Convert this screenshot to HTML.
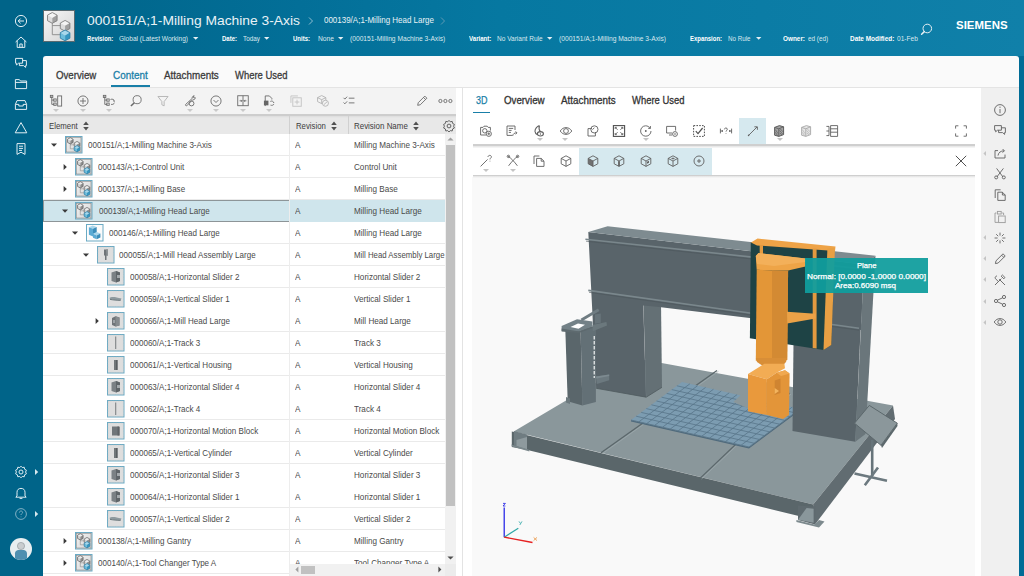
<!DOCTYPE html>
<html><head><meta charset="utf-8">
<style>
*{box-sizing:border-box}
html,body{margin:0;padding:0}
body{width:1024px;height:576px;overflow:hidden;position:relative;font-family:"Liberation Sans",sans-serif;background:#006489;color:#464646}
.a{position:absolute}
.t{white-space:nowrap;line-height:1}
svg{overflow:visible}
</style></head><body>
<div class=a style='left:0px;top:0px;width:1024px;height:576px;background:linear-gradient(90deg,#006489 0px,#006489 43px,#036f98 300px,#0678a1 500px,#1080a9 1024px);'></div>
<div class=a style='left:0px;top:56px;width:1024px;height:520px;background:#006c96;'></div>
<div class=a style='left:0px;top:0px;width:43px;height:576px;background:#006489;'></div>
<svg class=a style='left:43px;top:10px;' width='32' height='32' viewBox='0 0 32 32'><defs><linearGradient id='hg' x1='0' y1='0' x2='1' y2='1'><stop offset='0' stop-color='#f8f8f8'/><stop offset='1' stop-color='#d2d2d2'/></linearGradient></defs><rect x='0.5' y='0.5' width='31' height='31' fill='url(#hg)' stroke='#5a6a70' stroke-width='1'/><g transform='scale(1.0)'><path d='M9.3 13V24.7H18M9.3 15.6H18' fill='none' stroke='#8a8a8a' stroke-width='0.9'/><polygon points='9.3,2.524 14.100000000000001,5.1160000000000005 9.3,7.9 4.500000000000001,5.1160000000000005' fill='#f4f4f4'/><polygon points='4.500000000000001,5.1160000000000005 9.3,7.9 9.3,13.276 4.500000000000001,10.684000000000001' fill='#dcdcdc'/><polygon points='9.3,7.9 14.100000000000001,5.1160000000000005 14.100000000000001,10.684000000000001 9.3,13.276' fill='#a0a0a0'/><polygon points='9.3,2.524 14.100000000000001,5.1160000000000005 14.100000000000001,10.684000000000001 9.3,13.276 4.500000000000001,10.684000000000001 4.500000000000001,5.1160000000000005' fill='none' stroke='#7a7a7a' stroke-width='0.86'/><polygon points='22.1,10.424 26.900000000000002,13.016000000000002 22.1,15.8 17.3,13.016000000000002' fill='#f4f4f4'/><polygon points='17.3,13.016000000000002 22.1,15.8 22.1,21.176000000000002 17.3,18.584' fill='#dcdcdc'/><polygon points='22.1,15.8 26.900000000000002,13.016000000000002 26.900000000000002,18.584 22.1,21.176000000000002' fill='#a0a0a0'/><polygon points='22.1,10.424 26.900000000000002,13.016000000000002 26.900000000000002,18.584 22.1,21.176000000000002 17.3,18.584 17.3,13.016000000000002' fill='none' stroke='#7a7a7a' stroke-width='0.86'/><polygon points='22.1,20.023999999999997 26.900000000000002,22.616 22.1,25.4 17.3,22.616' fill='#a8d8ec'/><polygon points='17.3,22.616 22.1,25.4 22.1,30.776 17.3,28.183999999999997' fill='#6cbddc'/><polygon points='22.1,25.4 26.900000000000002,22.616 26.900000000000002,28.183999999999997 22.1,30.776' fill='#3596c0'/><polygon points='22.1,20.023999999999997 26.900000000000002,22.616 26.900000000000002,28.183999999999997 22.1,30.776 17.3,28.183999999999997 17.3,22.616' fill='none' stroke='#2a7fa8' stroke-width='0.86'/></g></svg>
<span class='a t' style='left:87.00px;top:13.84px;font-size:13.6px;color:#e9f2f6;transform:scaleX(1.0177);transform-origin:0 0;'>000151/A;1-Milling Machine 3-Axis</span>
<svg class=a style='left:307px;top:16px;' width='8' height='10' viewBox='0 0 8 10'><path d='M2 1.5L5.5 5L2 8.5' fill='none' stroke='#8fbfd2' stroke-width='1'/></svg>
<span class='a t' style='left:324.00px;top:16.26px;font-size:8.4px;color:#e9f2f6;transform:scaleX(0.9526);transform-origin:0 0;'>000139/A;1-Milling Head Large</span>
<svg class=a style='left:439px;top:16px;' width='8' height='10' viewBox='0 0 8 10'><path d='M2 1.5L5.5 5L2 8.5' fill='none' stroke='#5d9ab4' stroke-width='1'/></svg>
<span class='a t' style='left:87.00px;top:34.85px;font-size:7.0px;color:#ffffff;font-weight:700;transform:scaleX(0.8345);transform-origin:0 0;'>Revision:</span>
<span class='a t' style='left:119.00px;top:34.85px;font-size:7.0px;color:#dbe9ef;transform:scaleX(0.9400);transform-origin:0 0;'>Global (Latest Working)</span>
<svg class=a style='left:192.5px;top:36.6px;' width='6' height='4' viewBox='0 0 6 4'><path d='M0 0H5.4L2.7 2.8Z' fill='#e6f0f4'/></svg>
<span class='a t' style='left:221.50px;top:34.85px;font-size:7.0px;color:#ffffff;font-weight:700;transform:scaleX(0.8564);transform-origin:0 0;'>Date:</span>
<span class='a t' style='left:242.50px;top:34.85px;font-size:7.0px;color:#dbe9ef;transform:scaleX(0.9097);transform-origin:0 0;'>Today</span>
<svg class=a style='left:263.7px;top:36.6px;' width='6' height='4' viewBox='0 0 6 4'><path d='M0 0H5.4L2.7 2.8Z' fill='#e6f0f4'/></svg>
<span class='a t' style='left:293.00px;top:34.85px;font-size:7.0px;color:#ffffff;font-weight:700;transform:scaleX(0.8567);transform-origin:0 0;'>Units:</span>
<span class='a t' style='left:318.20px;top:34.85px;font-size:7.0px;color:#dbe9ef;transform:scaleX(0.9561);transform-origin:0 0;'>None</span>
<svg class=a style='left:338px;top:36.6px;' width='6' height='4' viewBox='0 0 6 4'><path d='M0 0H5.4L2.7 2.8Z' fill='#e6f0f4'/></svg>
<span class='a t' style='left:469.30px;top:34.85px;font-size:7.0px;color:#ffffff;font-weight:700;transform:scaleX(0.8720);transform-origin:0 0;'>Variant:</span>
<span class='a t' style='left:497.40px;top:34.85px;font-size:7.0px;color:#dbe9ef;transform:scaleX(0.9324);transform-origin:0 0;'>No Variant Rule</span>
<svg class=a style='left:547.4px;top:36.6px;' width='6' height='4' viewBox='0 0 6 4'><path d='M0 0H5.4L2.7 2.8Z' fill='#e6f0f4'/></svg>
<span class='a t' style='left:690.00px;top:34.85px;font-size:7.0px;color:#ffffff;font-weight:700;transform:scaleX(0.8480);transform-origin:0 0;'>Expansion:</span>
<span class='a t' style='left:728.00px;top:34.85px;font-size:7.0px;color:#dbe9ef;transform:scaleX(0.8894);transform-origin:0 0;'>No Rule</span>
<svg class=a style='left:755.6px;top:36.6px;' width='6' height='4' viewBox='0 0 6 4'><path d='M0 0H5.4L2.7 2.8Z' fill='#e6f0f4'/></svg>
<span class='a t' style='left:783.00px;top:34.85px;font-size:7.0px;color:#ffffff;font-weight:700;transform:scaleX(0.9119);transform-origin:0 0;'>Owner:</span>
<span class='a t' style='left:807.60px;top:34.85px;font-size:7.0px;color:#dbe9ef;transform:scaleX(0.9104);transform-origin:0 0;'>ed (ed)</span>
<span class='a t' style='left:850.00px;top:34.85px;font-size:7.0px;color:#ffffff;font-weight:700;transform:scaleX(0.9184);transform-origin:0 0;'>Date Modified:</span>
<span class='a t' style='left:897.00px;top:34.85px;font-size:7.0px;color:#dbe9ef;transform:scaleX(0.9375);transform-origin:0 0;'>01-Feb</span>
<span class='a t' style='left:349.90px;top:34.85px;font-size:7.0px;color:#dbe9ef;transform:scaleX(0.9520);transform-origin:0 0;'>(000151-Milling Machine 3-Axis)</span>
<span class='a t' style='left:558.90px;top:34.85px;font-size:7.0px;color:#dbe9ef;transform:scaleX(0.9516);transform-origin:0 0;'>(000151/A;1-Milling Machine 3-Axis)</span>
<svg class=a style='left:919px;top:22px;' width='14' height='14' viewBox='0 0 14 14'><circle cx='8.3' cy='6.5' r='4.3' fill='none' stroke='#e6f0f4' stroke-width='1'/><path d='M5.3 9.6L2.6 12.2' stroke='#e6f0f4' stroke-width='1.5' stroke-linecap='round'/></svg>
<span class='a t' style='left:955.60px;top:21.06px;font-size:10.4px;color:#ffffff;font-weight:700;transform:scaleX(1.1030);transform-origin:0 0;'>SIEMENS</span>
<svg class=a style='left:13px;top:13px;' width='16' height='16' viewBox='0 0 16 16'><circle cx='8' cy='8' r='5.6' stroke='#e2eef3' stroke-width='1' fill='none'/><path d='M11 8H5.2M7.6 5.6L5.2 8L7.6 10.4' stroke='#e2eef3' stroke-width='1' fill='none'/></svg>
<svg class=a style='left:13px;top:34px;' width='16' height='16' viewBox='0 0 16 16'><path d='M2.6 8L8 3L13.4 8M4.2 6.6V13.4H11.8V6.6M6.8 13.4V10H9.2V13.4' stroke='#e2eef3' stroke-width='1' fill='none'/></svg>
<svg class=a style='left:13px;top:55px;' width='16' height='16' viewBox='0 0 16 16'><path d='M2.6 3.4H9.6V8.2H5.6L3.4 10V8.2H2.6Z' stroke='#e2eef3' stroke-width='1' fill='none'/><path d='M9.6 5.6H13.4V10.6H12.6V12.4L10.6 10.6H6.4V8.2' stroke='#e2eef3' stroke-width='1' fill='none'/></svg>
<svg class=a style='left:13px;top:76px;' width='16' height='16' viewBox='0 0 16 16'><path d='M2.4 3.6H6.4L7.4 5H13.6V12.6H2.4Z M2.4 6.4H13.6' stroke='#e2eef3' stroke-width='1' fill='none'/></svg>
<svg class=a style='left:13px;top:97px;' width='16' height='16' viewBox='0 0 16 16'><path d='M2.4 7.4L4 3.6H12L13.6 7.4V12.4H2.4Z M2.4 7.4H5.8V9H10.2V7.4H13.6' stroke='#e2eef3' stroke-width='1' fill='none'/></svg>
<svg class=a style='left:13px;top:120px;' width='16' height='16' viewBox='0 0 16 16'><path d='M8 2.6L13.8 12.8H2.2Z' stroke='#e2eef3' stroke-width='1' fill='none'/></svg>
<svg class=a style='left:13px;top:141px;' width='16' height='16' viewBox='0 0 16 16'><path d='M4 2.6H12V13.4L8 11.2L4 13.4Z M6 5.2H10M6 7.4H10M6 9.4H9' stroke='#e2eef3' stroke-width='1' fill='none'/></svg>
<svg class=a style='left:13px;top:464px;' width='16' height='16' viewBox='0 0 16 16'><circle cx='8' cy='8' r='2' stroke='#e2eef3' stroke-width='1' fill='none'/><path d='M8 2.2L9.3 3.6L11.2 3.2L11.6 5.2L13.4 6.2L12.6 8L13.4 9.8L11.6 10.8L11.2 12.8L9.3 12.4L8 13.8L6.7 12.4L4.8 12.8L4.4 10.8L2.6 9.8L3.4 8L2.6 6.2L4.4 5.2L4.8 3.2L6.7 3.6Z' stroke='#e2eef3' stroke-width='1' fill='none'/></svg>
<svg class=a style='left:35px;top:469px;' width='4' height='6' viewBox='0 0 4 6'><path d='M0 0L3.2 3L0 6Z' fill='#d8e8ee'/></svg>
<svg class=a style='left:13px;top:485px;' width='16' height='16' viewBox='0 0 16 16'><path d='M4 11V7.2C4 4.8 5.6 3.4 8 3.4C10.4 3.4 12 4.8 12 7.2V11L13.2 12.2H2.8Z M6.6 13.4H9.4' stroke='#e2eef3' stroke-width='1' fill='none'/></svg>
<svg class=a style='left:13px;top:506px;' width='16' height='16' viewBox='0 0 16 16'><circle cx='8' cy='8' r='5.4' stroke='#7fb0c4' stroke-width='1' fill='none'/><path d='M6.4 6.6C6.4 5.6 7.2 5 8 5C8.9 5 9.6 5.6 9.6 6.4C9.6 7.6 8 7.6 8 9M8 10.6V11.2' stroke='#7fb0c4' stroke-width='1' fill='none'/></svg>
<svg class=a style='left:35px;top:511px;' width='4' height='6' viewBox='0 0 4 6'><path d='M0 0L3.2 3L0 6Z' fill='#d8e8ee'/></svg>
<svg class=a style='left:10px;top:538px;' width='22' height='22' viewBox='0 0 22 22'><defs><clipPath id='av'><circle cx='11' cy='11' r='11'/></clipPath></defs><circle cx='11' cy='11' r='11' fill='#e8eef0'/><g clip-path='url(#av)'><circle cx='11' cy='8' r='3.6' fill='#c9cdcf' stroke='#8d9397' stroke-width='0.6'/><path d='M5 22V15.6C5 13.4 6.6 12 8.6 12H13.4C15.4 12 17 13.4 17 15.6V22Z' fill='#4f8fb0'/></g></svg>
<div class=a style='left:43px;top:56px;width:976px;height:520px;background:#fafafa;border-radius:3px 3px 0 0'></div>
<span class='a t' style='left:56.30px;top:70.25px;font-size:11.0px;color:#3a3a3a;transform:scaleX(0.8791);transform-origin:0 0;-webkit-text-stroke:0.3px #3a3a3a'>Overview</span>
<span class='a t' style='left:113.00px;top:70.25px;font-size:11.0px;color:#197fa8;transform:scaleX(0.9006);transform-origin:0 0;-webkit-text-stroke:0.3px #197fa8'>Content</span>
<span class='a t' style='left:164.00px;top:70.25px;font-size:11.0px;color:#3a3a3a;transform:scaleX(0.8963);transform-origin:0 0;-webkit-text-stroke:0.3px #3a3a3a'>Attachments</span>
<span class='a t' style='left:235.00px;top:70.25px;font-size:11.0px;color:#3a3a3a;transform:scaleX(0.8603);transform-origin:0 0;-webkit-text-stroke:0.3px #3a3a3a'>Where Used</span>
<div class=a style='left:111px;top:85.4px;width:39px;height:1.6px;background:#197fa8;'></div>
<div class=a style='left:43px;top:87px;width:976px;height:1px;background:#e4e4e4;'></div>
<div class=a style='left:43px;top:88px;width:413px;height:27px;background:#f3f3f3;'></div>
<div class=a style='left:43px;top:116px;width:413px;height:18px;background:#e8e8e8;'></div>
<div class=a style='left:43px;top:114.4px;width:413px;height:1.3px;background:#cdcdcd;'></div>
<div class=a style='left:43px;top:115.7px;width:413px;height:2.6px;background:linear-gradient(#dcdcdc,#e8e8e8);'></div>
<div class=a style='left:43px;top:134px;width:402px;height:442px;background:#ffffff;'></div>
<svg class=a style='left:49.2px;top:94.0px;' width='14' height='14' viewBox='0 0 14 14'><g transform='translate(7 7) scale(0.94) translate(-7 -7)'><path d='M2.5 2V10.6H5.2M2.5 6H5.2' fill='none' stroke='#6a6a6a' stroke-width='0.95'/><rect x='1' y='1' width='2.6' height='2.2' fill='none' stroke='#6a6a6a' stroke-width='0.95'/><rect x='4.6' y='4.8' width='2.6' height='2.4' fill='none' stroke='#6a6a6a' stroke-width='0.95'/><rect x='4.6' y='9.2' width='2.6' height='2.4' fill='none' stroke='#6a6a6a' stroke-width='0.95'/><rect x='8.8' y='1.6' width='4.2' height='10.8' fill='none' stroke='#6a6a6a' stroke-width='0.95'/></g></svg>
<svg class=a style='left:53px;top:109.0px;' width='6' height='4' viewBox='0 0 6 4'><path d='M0 0H6L3 3Z' fill='#c9c9c9'/></svg>
<svg class=a style='left:75.5px;top:94.0px;' width='14' height='14' viewBox='0 0 14 14'><g transform='translate(7 7) scale(0.94) translate(-7 -7)'><circle cx='7' cy='7' r='5.4' fill='none' stroke='#6a6a6a' stroke-width='0.95'/><path d='M7 3.8V10.2M3.8 7H10.2' fill='none' stroke='#6a6a6a' stroke-width='0.95'/></g></svg>
<svg class=a style='left:79.5px;top:109.0px;' width='6' height='4' viewBox='0 0 6 4'><path d='M0 0H6L3 3Z' fill='#c9c9c9'/></svg>
<svg class=a style='left:102.0px;top:94.0px;' width='14' height='14' viewBox='0 0 14 14'><g transform='translate(7 7) scale(0.94) translate(-7 -7)'><path d='M2.5 2V10.6H5.2M2.5 6H5.2' fill='none' stroke='#6a6a6a' stroke-width='0.95'/><rect x='1' y='1' width='2.6' height='2.2' fill='none' stroke='#6a6a6a' stroke-width='0.95'/><rect x='4.6' y='4.8' width='2.6' height='2.4' fill='none' stroke='#6a6a6a' stroke-width='0.95'/><rect x='4.6' y='9.2' width='2.6' height='2.4' fill='none' stroke='#6a6a6a' stroke-width='0.95'/><path d='M8.6 5.4C10.6 4.4 12.6 5.4 12.8 7.4M12.8 7.4L11.4 6.8M9.2 10.6C10.8 11 12.4 10.2 12.8 8.8' fill='none' stroke='#6a6a6a' stroke-width='0.95'/></g></svg>
<svg class=a style='left:105.7px;top:109.0px;' width='6' height='4' viewBox='0 0 6 4'><path d='M0 0H6L3 3Z' fill='#c9c9c9'/></svg>
<svg class=a style='left:129.0px;top:94.0px;' width='14' height='14' viewBox='0 0 14 14'><g transform='translate(7 7) scale(0.94) translate(-7 -7)'><circle cx='8.2' cy='5.6' r='4.3' fill='none' stroke='#6a6a6a' stroke-width='0.95'/><path d='M5.2 8.8L1.6 12.4' fill='none' stroke='#6a6a6a' stroke-width='1.6'/></g></svg>
<svg class=a style='left:155.6px;top:94.0px;' width='14' height='14' viewBox='0 0 14 14'><g transform='translate(7 7) scale(0.94) translate(-7 -7)'><path d='M1.6 2.2H12.4L8.2 7.6V12.2L5.8 11V7.6Z' fill='none' stroke='#b4b4b4' stroke-width='1'/></g></svg>
<svg class=a style='left:182.5px;top:94.0px;' width='14' height='14' viewBox='0 0 14 14'><g transform='translate(7 7) scale(0.94) translate(-7 -7)'><path d='M11.6 1.6C10 1.6 9 2.8 9.4 4.2L2.4 10.6C1.8 11.2 2.4 12.4 3.4 12.2L10 5.6C11.4 6 12.6 5 12.6 3.4L11.2 3.8L10.4 3L10.8 1.8Z' fill='none' stroke='#6a6a6a' stroke-width='0.95'/><circle cx='8.6' cy='9.6' r='2.6' fill='none' stroke='#6a6a6a' stroke-width='0.95'/></g></svg>
<svg class=a style='left:186.7px;top:109.0px;' width='6' height='4' viewBox='0 0 6 4'><path d='M0 0H6L3 3Z' fill='#c9c9c9'/></svg>
<svg class=a style='left:209.0px;top:94.0px;' width='14' height='14' viewBox='0 0 14 14'><g transform='translate(7 7) scale(0.94) translate(-7 -7)'><circle cx='7' cy='7' r='5.4' fill='none' stroke='#6a6a6a' stroke-width='0.95'/><path d='M4.4 6L7 8.6L9.6 6' fill='none' stroke='#6a6a6a' stroke-width='0.95'/></g></svg>
<svg class=a style='left:213px;top:109.0px;' width='6' height='4' viewBox='0 0 6 4'><path d='M0 0H6L3 3Z' fill='#c9c9c9'/></svg>
<svg class=a style='left:235.6px;top:94.0px;' width='14' height='14' viewBox='0 0 14 14'><g transform='translate(7 7) scale(0.94) translate(-7 -7)'><rect x='1.4' y='1.4' width='11.2' height='10.6' fill='none' stroke='#6a6a6a' stroke-width='0.95'/><path d='M7 1.4V12M3.4 6.8H6M6 6.8L5 5.8M6 6.8L5 7.8M10.6 6.8H8M8 6.8L9 5.8M8 6.8L9 7.8' fill='none' stroke='#6a6a6a' stroke-width='0.95'/></g></svg>
<svg class=a style='left:239.8px;top:109.0px;' width='6' height='4' viewBox='0 0 6 4'><path d='M0 0H6L3 3Z' fill='#c9c9c9'/></svg>
<svg class=a style='left:262.4px;top:94.0px;' width='14' height='14' viewBox='0 0 14 14'><g transform='translate(7 7) scale(0.94) translate(-7 -7)'><path d='M3 12.4V1.6H7.4L10 4.2V5.4' fill='none' stroke='#6a6a6a' stroke-width='0.95'/><rect x='1.6' y='6.6' width='4.8' height='5' fill='#666' /><path d='M8.4 7.4C10.2 6.6 12 7.4 12.2 9.2M8.6 11.4C10.2 12 11.8 11.4 12.2 10.2' fill='none' stroke='#6a6a6a' stroke-width='0.95'/></g></svg>
<svg class=a style='left:266px;top:109.0px;' width='6' height='4' viewBox='0 0 6 4'><path d='M0 0H6L3 3Z' fill='#c9c9c9'/></svg>
<svg class=a style='left:289.0px;top:94.0px;' width='14' height='14' viewBox='0 0 14 14'><g transform='translate(7 7) scale(0.94) translate(-7 -7)'><path d='M1.6 9V1.6H9' fill='none' stroke='#c4c4c4' stroke-width='1'/><rect x='3.6' y='3.6' width='9' height='9' fill='none' stroke='#c4c4c4' stroke-width='1'/><path d='M8.1 5.6V10.6M5.6 8.1H10.6' fill='none' stroke='#c4c4c4' stroke-width='1'/></g></svg>
<svg class=a style='left:315.5px;top:94.0px;' width='14' height='14' viewBox='0 0 14 14'><g transform='translate(7 7) scale(0.94) translate(-7 -7)'><path d='M5.6 1.2L10 3.4V7.6L5.6 9.8L1.2 7.6V3.4Z M1.2 3.4L5.6 5.6L10 3.4M5.6 5.6V9.8' fill='none' stroke='#b0b0b0' stroke-width='0.9'/><circle cx='9.6' cy='9.4' r='3.2' fill='#f3f3f3' stroke='#b0b0b0' stroke-width='0.9'/><path d='M8 10.8L11.2 8' stroke='#b0b0b0' stroke-width='0.9'/></g></svg>
<svg class=a style='left:342.3px;top:94.0px;' width='14' height='14' viewBox='0 0 14 14'><g transform='translate(7 7) scale(0.94) translate(-7 -7)'><path d='M1.2 3.6L2.6 5L5 2.4M1.2 8.6L2.6 10L5 7.4M6.8 4H12.8M6.8 9H12.8' fill='none' stroke='#6a6a6a' stroke-width='0.95'/></g></svg>
<svg class=a style='left:414.5px;top:94.0px;' width='14' height='14' viewBox='0 0 14 14'><g transform='translate(7 7) scale(0.94) translate(-7 -7)'><path d='M2.4 11.6L3 8.8L10 1.8L12.2 4L5.2 11Z M8.6 3.2L10.8 5.4' fill='none' stroke='#6a6a6a' stroke-width='0.95'/></g></svg>
<svg class=a style='left:438px;top:99px;' width='16' height='4' viewBox='0 0 16 4'><circle cx='2.4' cy='2' r='1.6' fill='none' stroke='#6a6a6a' stroke-width='0.9'/><circle cx='7.4' cy='2' r='1.6' fill='none' stroke='#6a6a6a' stroke-width='0.9'/><circle cx='12.4' cy='2' r='1.6' fill='none' stroke='#6a6a6a' stroke-width='0.9'/></svg>
<span class='a t' style='left:49.10px;top:121.52px;font-size:8.8px;color:#3c3c3c;transform:scaleX(0.8891);transform-origin:0 0;'>Element</span>
<svg class=a style='left:83px;top:120.8px;' width='6' height='10' viewBox='0 0 6 10'><path d='M0.2 4H5.8L3 0.6Z M0.2 6H5.8L3 9.4Z' fill='#505050'/></svg>
<div class=a style='left:289px;top:116px;width:1px;height:18px;background:#d0d0d0;'></div>
<span class='a t' style='left:295.50px;top:121.52px;font-size:8.8px;color:#3c3c3c;transform:scaleX(0.8830);transform-origin:0 0;'>Revision</span>
<svg class=a style='left:330.8px;top:120.8px;' width='6' height='10' viewBox='0 0 6 10'><path d='M0.2 4H5.8L3 0.6Z M0.2 6H5.8L3 9.4Z' fill='#505050'/></svg>
<div class=a style='left:348.3px;top:116px;width:1px;height:18px;background:#d0d0d0;'></div>
<span class='a t' style='left:354.00px;top:121.52px;font-size:8.8px;color:#3c3c3c;transform:scaleX(0.9018);transform-origin:0 0;'>Revision Name</span>
<svg class=a style='left:413.3px;top:120.8px;' width='6' height='10' viewBox='0 0 6 10'><path d='M0.2 4H5.8L3 0.6Z M0.2 6H5.8L3 9.4Z' fill='#505050'/></svg>
<svg class=a style='left:441.5px;top:118.5px;' width='14' height='14' viewBox='0 0 14 14'><circle cx='7' cy='7' r='1.9' fill='none' stroke='#555' stroke-width='0.9'/><path d='M7 1.4L8.3 2.8L10.2 2.4L10.6 4.4L12.4 5.4L11.6 7.2L12.4 9L10.6 10L10.2 12L8.3 11.6L7 13L5.7 11.6L3.8 12L3.4 10L1.6 9L2.4 7.2L1.6 5.4L3.4 4.4L3.8 2.4L5.7 2.8Z' fill='none' stroke='#555' stroke-width='0.9'/></svg>
<svg class=a style='left:0px;top:0px;' width='1' height='1' viewBox='0 0 1 1'><defs><linearGradient id='tgr' x1='0' y1='0' x2='1' y2='1'><stop offset='0' stop-color='#f4f4f4'/><stop offset='1' stop-color='#d4d4d4'/></linearGradient></defs></svg>
<div class=a style='left:43px;top:154.9px;width:402px;height:1px;background:#eaeaea;'></div>
<svg class=a style='left:51.0px;top:142.5px;' width='7' height='5' viewBox='0 0 7 5'><path d='M0 0.5H6L3 3.8Z' fill='#3a3a3a'/></svg>
<svg class=a style='left:64.6px;top:136px;' width='17.5' height='17.5' viewBox='0 0 17.5 17.5'><rect x='0.5' y='0.5' width='16.5' height='16.5' fill='url(#tgr)' stroke='#6aaac4' stroke-width='1'/><rect x='1.5' y='1.5' width='14.5' height='14.5' fill='none' stroke='#8a8a8a' stroke-width='0.6'/><path d='M5.3 7V12.8H9.5M5.3 8.8H9.5' fill='none' stroke='#8a8a8a' stroke-width='0.6'/><polygon points='5.3,1.6639999999999997 8.1,3.176 5.3,4.8 2.5,3.176' fill='#eeeeee'/><polygon points='2.5,3.176 5.3,4.8 5.3,7.936 2.5,6.4239999999999995' fill='#d0d0d0'/><polygon points='5.3,4.8 8.1,3.176 8.1,6.4239999999999995 5.3,7.936' fill='#8e8e8e'/><polygon points='5.3,1.6639999999999997 8.1,3.176 8.1,6.4239999999999995 5.3,7.936 2.5,6.4239999999999995 2.5,3.176' fill='none' stroke='#666666' stroke-width='0.75'/><polygon points='12,5.4639999999999995 14.8,6.976 12,8.6 9.2,6.976' fill='#eeeeee'/><polygon points='9.2,6.976 12,8.6 12,11.736 9.2,10.224' fill='#d0d0d0'/><polygon points='12,8.6 14.8,6.976 14.8,10.224 12,11.736' fill='#8e8e8e'/><polygon points='12,5.4639999999999995 14.8,6.976 14.8,10.224 12,11.736 9.2,10.224 9.2,6.976' fill='none' stroke='#666666' stroke-width='0.75'/><polygon points='12,9.564 14.8,11.075999999999999 12,12.7 9.2,11.075999999999999' fill='#a8d8ec'/><polygon points='9.2,11.075999999999999 12,12.7 12,15.835999999999999 9.2,14.324' fill='#6cbddc'/><polygon points='12,12.7 14.8,11.075999999999999 14.8,14.324 12,15.835999999999999' fill='#3596c0'/><polygon points='12,9.564 14.8,11.075999999999999 14.8,14.324 12,15.835999999999999 9.2,14.324 9.2,11.075999999999999' fill='none' stroke='#2a7fa8' stroke-width='0.75'/></svg>
<span class='a t' style='left:87.50px;top:140.59px;font-size:8.6px;color:#4a4a4a;transform:scaleX(0.9350);transform-origin:0 0;'>000151/A;1-Milling Machine 3-Axis</span>
<span class='a t' style='left:295.30px;top:140.59px;font-size:8.6px;color:#4a4a4a;transform:scaleX(0.9500);transform-origin:0 0;'>A</span>
<span class='a t' style='left:354.30px;top:140.59px;font-size:8.6px;color:#4a4a4a;transform:scaleX(0.9450);transform-origin:0 0;'>Milling Machine 3-Axis</span>
<div class=a style='left:43px;top:176.9px;width:402px;height:1px;background:#eaeaea;'></div>
<svg class=a style='left:63.2px;top:163.5px;' width='5' height='7' viewBox='0 0 5 7'><path d='M0.6 0L3.8 3L0.6 6Z' fill='#3a3a3a'/></svg>
<svg class=a style='left:75.3px;top:158px;' width='17.5' height='17.5' viewBox='0 0 17.5 17.5'><rect x='0.5' y='0.5' width='16.5' height='16.5' fill='url(#tgr)' stroke='#6aaac4' stroke-width='1'/><rect x='1.5' y='1.5' width='14.5' height='14.5' fill='none' stroke='#8a8a8a' stroke-width='0.6'/><path d='M5.3 7V12.8H9.5M5.3 8.8H9.5' fill='none' stroke='#8a8a8a' stroke-width='0.6'/><polygon points='5.3,1.6639999999999997 8.1,3.176 5.3,4.8 2.5,3.176' fill='#eeeeee'/><polygon points='2.5,3.176 5.3,4.8 5.3,7.936 2.5,6.4239999999999995' fill='#d0d0d0'/><polygon points='5.3,4.8 8.1,3.176 8.1,6.4239999999999995 5.3,7.936' fill='#8e8e8e'/><polygon points='5.3,1.6639999999999997 8.1,3.176 8.1,6.4239999999999995 5.3,7.936 2.5,6.4239999999999995 2.5,3.176' fill='none' stroke='#666666' stroke-width='0.75'/><polygon points='12,5.4639999999999995 14.8,6.976 12,8.6 9.2,6.976' fill='#eeeeee'/><polygon points='9.2,6.976 12,8.6 12,11.736 9.2,10.224' fill='#d0d0d0'/><polygon points='12,8.6 14.8,6.976 14.8,10.224 12,11.736' fill='#8e8e8e'/><polygon points='12,5.4639999999999995 14.8,6.976 14.8,10.224 12,11.736 9.2,10.224 9.2,6.976' fill='none' stroke='#666666' stroke-width='0.75'/><polygon points='12,9.564 14.8,11.075999999999999 12,12.7 9.2,11.075999999999999' fill='#a8d8ec'/><polygon points='9.2,11.075999999999999 12,12.7 12,15.835999999999999 9.2,14.324' fill='#6cbddc'/><polygon points='12,12.7 14.8,11.075999999999999 14.8,14.324 12,15.835999999999999' fill='#3596c0'/><polygon points='12,9.564 14.8,11.075999999999999 14.8,14.324 12,15.835999999999999 9.2,14.324 9.2,11.075999999999999' fill='none' stroke='#2a7fa8' stroke-width='0.75'/></svg>
<span class='a t' style='left:98.15px;top:162.59px;font-size:8.6px;color:#4a4a4a;transform:scaleX(0.9350);transform-origin:0 0;'>000143/A;1-Control Unit</span>
<span class='a t' style='left:295.30px;top:162.59px;font-size:8.6px;color:#4a4a4a;transform:scaleX(0.9500);transform-origin:0 0;'>A</span>
<span class='a t' style='left:354.30px;top:162.59px;font-size:8.6px;color:#4a4a4a;transform:scaleX(0.9450);transform-origin:0 0;'>Control Unit</span>
<div class=a style='left:43px;top:198.9px;width:402px;height:1px;background:#eaeaea;'></div>
<svg class=a style='left:63.2px;top:185.5px;' width='5' height='7' viewBox='0 0 5 7'><path d='M0.6 0L3.8 3L0.6 6Z' fill='#3a3a3a'/></svg>
<svg class=a style='left:75.3px;top:180px;' width='17.5' height='17.5' viewBox='0 0 17.5 17.5'><rect x='0.5' y='0.5' width='16.5' height='16.5' fill='url(#tgr)' stroke='#6aaac4' stroke-width='1'/><rect x='1.5' y='1.5' width='14.5' height='14.5' fill='none' stroke='#8a8a8a' stroke-width='0.6'/><path d='M5.3 7V12.8H9.5M5.3 8.8H9.5' fill='none' stroke='#8a8a8a' stroke-width='0.6'/><polygon points='5.3,1.6639999999999997 8.1,3.176 5.3,4.8 2.5,3.176' fill='#eeeeee'/><polygon points='2.5,3.176 5.3,4.8 5.3,7.936 2.5,6.4239999999999995' fill='#d0d0d0'/><polygon points='5.3,4.8 8.1,3.176 8.1,6.4239999999999995 5.3,7.936' fill='#8e8e8e'/><polygon points='5.3,1.6639999999999997 8.1,3.176 8.1,6.4239999999999995 5.3,7.936 2.5,6.4239999999999995 2.5,3.176' fill='none' stroke='#666666' stroke-width='0.75'/><polygon points='12,5.4639999999999995 14.8,6.976 12,8.6 9.2,6.976' fill='#eeeeee'/><polygon points='9.2,6.976 12,8.6 12,11.736 9.2,10.224' fill='#d0d0d0'/><polygon points='12,8.6 14.8,6.976 14.8,10.224 12,11.736' fill='#8e8e8e'/><polygon points='12,5.4639999999999995 14.8,6.976 14.8,10.224 12,11.736 9.2,10.224 9.2,6.976' fill='none' stroke='#666666' stroke-width='0.75'/><polygon points='12,9.564 14.8,11.075999999999999 12,12.7 9.2,11.075999999999999' fill='#a8d8ec'/><polygon points='9.2,11.075999999999999 12,12.7 12,15.835999999999999 9.2,14.324' fill='#6cbddc'/><polygon points='12,12.7 14.8,11.075999999999999 14.8,14.324 12,15.835999999999999' fill='#3596c0'/><polygon points='12,9.564 14.8,11.075999999999999 14.8,14.324 12,15.835999999999999 9.2,14.324 9.2,11.075999999999999' fill='none' stroke='#2a7fa8' stroke-width='0.75'/></svg>
<span class='a t' style='left:98.15px;top:184.59px;font-size:8.6px;color:#4a4a4a;transform:scaleX(0.9350);transform-origin:0 0;'>000137/A;1-Milling Base</span>
<span class='a t' style='left:295.30px;top:184.59px;font-size:8.6px;color:#4a4a4a;transform:scaleX(0.9500);transform-origin:0 0;'>A</span>
<span class='a t' style='left:354.30px;top:184.59px;font-size:8.6px;color:#4a4a4a;transform:scaleX(0.9450);transform-origin:0 0;'>Milling Base</span>
<div class=a style='left:43px;top:199.5px;width:402px;height:22px;background:#cfe5ec;'></div>
<div class=a style='left:43px;top:199.5px;width:246.6px;height:22px;background:transparent;border:1px solid #8d9598'></div>
<svg class=a style='left:61.7px;top:208.5px;' width='7' height='5' viewBox='0 0 7 5'><path d='M0 0.5H6L3 3.8Z' fill='#3a3a3a'/></svg>
<svg class=a style='left:75.3px;top:202px;' width='17.5' height='17.5' viewBox='0 0 17.5 17.5'><rect x='0.5' y='0.5' width='16.5' height='16.5' fill='url(#tgr)' stroke='#6aaac4' stroke-width='1'/><rect x='1.5' y='1.5' width='14.5' height='14.5' fill='none' stroke='#8a8a8a' stroke-width='0.6'/><path d='M5.3 7V12.8H9.5M5.3 8.8H9.5' fill='none' stroke='#8a8a8a' stroke-width='0.6'/><polygon points='5.3,1.6639999999999997 8.1,3.176 5.3,4.8 2.5,3.176' fill='#eeeeee'/><polygon points='2.5,3.176 5.3,4.8 5.3,7.936 2.5,6.4239999999999995' fill='#d0d0d0'/><polygon points='5.3,4.8 8.1,3.176 8.1,6.4239999999999995 5.3,7.936' fill='#8e8e8e'/><polygon points='5.3,1.6639999999999997 8.1,3.176 8.1,6.4239999999999995 5.3,7.936 2.5,6.4239999999999995 2.5,3.176' fill='none' stroke='#666666' stroke-width='0.75'/><polygon points='12,5.4639999999999995 14.8,6.976 12,8.6 9.2,6.976' fill='#eeeeee'/><polygon points='9.2,6.976 12,8.6 12,11.736 9.2,10.224' fill='#d0d0d0'/><polygon points='12,8.6 14.8,6.976 14.8,10.224 12,11.736' fill='#8e8e8e'/><polygon points='12,5.4639999999999995 14.8,6.976 14.8,10.224 12,11.736 9.2,10.224 9.2,6.976' fill='none' stroke='#666666' stroke-width='0.75'/><polygon points='12,9.564 14.8,11.075999999999999 12,12.7 9.2,11.075999999999999' fill='#a8d8ec'/><polygon points='9.2,11.075999999999999 12,12.7 12,15.835999999999999 9.2,14.324' fill='#6cbddc'/><polygon points='12,12.7 14.8,11.075999999999999 14.8,14.324 12,15.835999999999999' fill='#3596c0'/><polygon points='12,9.564 14.8,11.075999999999999 14.8,14.324 12,15.835999999999999 9.2,14.324 9.2,11.075999999999999' fill='none' stroke='#2a7fa8' stroke-width='0.75'/></svg>
<span class='a t' style='left:98.95px;top:206.59px;font-size:8.6px;color:#4a4a4a;transform:scaleX(0.9350);transform-origin:0 0;'>000139/A;1-Milling Head Large</span>
<span class='a t' style='left:295.30px;top:206.59px;font-size:8.6px;color:#4a4a4a;transform:scaleX(0.9500);transform-origin:0 0;'>A</span>
<span class='a t' style='left:354.30px;top:206.59px;font-size:8.6px;color:#4a4a4a;transform:scaleX(0.9450);transform-origin:0 0;'>Milling Head Large</span>
<div class=a style='left:43px;top:242.9px;width:402px;height:1px;background:#eaeaea;'></div>
<svg class=a style='left:72.4px;top:230.5px;' width='7' height='5' viewBox='0 0 7 5'><path d='M0 0.5H6L3 3.8Z' fill='#3a3a3a'/></svg>
<svg class=a style='left:86.0px;top:224px;' width='17.5' height='17.5' viewBox='0 0 17.5 17.5'><rect x='0.5' y='0.5' width='16.5' height='16.5' fill='#fbfbfb' stroke='#6aaac4' stroke-width='1'/><path d='M2.9 3.2L6.6 1.4L10.7 3L7 4.8Z' fill='#a8d6ec'/><path d='M2.9 3.2L7 4.8V12.5L2.9 10.8Z' fill='#5aaad4'/><path d='M7 4.8L10.7 3V8.5L7 10.3Z' fill='#3a8dba'/><path d='M7 9.8L10.7 8L14.4 9.6L10.7 11.4Z' fill='#a8d6ec'/><path d='M7 9.8L10.7 11.4V15.3L7 13.7Z' fill='#5aaad4'/><path d='M10.7 11.4L14.4 9.6V13.5L10.7 15.3Z' fill='#3a8dba'/></svg>
<span class='a t' style='left:108.80px;top:228.59px;font-size:8.6px;color:#4a4a4a;transform:scaleX(0.9350);transform-origin:0 0;'>000146/A;1-Milling Head Large</span>
<span class='a t' style='left:295.30px;top:228.59px;font-size:8.6px;color:#4a4a4a;transform:scaleX(0.9500);transform-origin:0 0;'>A</span>
<span class='a t' style='left:354.30px;top:228.59px;font-size:8.6px;color:#4a4a4a;transform:scaleX(0.9450);transform-origin:0 0;'>Milling Head Large</span>
<div class=a style='left:43px;top:264.9px;width:402px;height:1px;background:#eaeaea;'></div>
<svg class=a style='left:83.1px;top:252.5px;' width='7' height='5' viewBox='0 0 7 5'><path d='M0 0.5H6L3 3.8Z' fill='#3a3a3a'/></svg>
<svg class=a style='left:96.69999999999999px;top:246px;' width='17.5' height='17.5' viewBox='0 0 17.5 17.5'><rect x='0.5' y='0.5' width='16.5' height='16.5' fill='#dedede' stroke='#6aaac4' stroke-width='1'/><rect x='1.2' y='1.2' width='15.1' height='15.1' fill='none' stroke='#c8c8c8' stroke-width='0.5' stroke-dasharray='0.8 0.8'/><path d='M7 3.5H11V9.5H9.5V14H8V9.5H7Z' fill='#6f7478'/><path d='M9 3.5H11V9.5H9.5Z' fill='#8c9194'/></svg>
<span class='a t' style='left:119.45px;top:250.59px;font-size:8.6px;color:#4a4a4a;transform:scaleX(0.9350);transform-origin:0 0;'>000055/A;1-Mill Head Assembly Large</span>
<span class='a t' style='left:295.30px;top:250.59px;font-size:8.6px;color:#4a4a4a;transform:scaleX(0.9500);transform-origin:0 0;'>A</span>
<span class='a t' style='left:354.30px;top:250.59px;font-size:8.6px;color:#4a4a4a;transform:scaleX(0.9108);transform-origin:0 0;'>Mill Head Assembly Large</span>
<div class=a style='left:43px;top:286.9px;width:402px;height:1px;background:#eaeaea;'></div>
<svg class=a style='left:107.39999999999999px;top:268px;' width='17.5' height='17.5' viewBox='0 0 17.5 17.5'><rect x='0.5' y='0.5' width='16.5' height='16.5' fill='#dedede' stroke='#6aaac4' stroke-width='1'/><rect x='1.2' y='1.2' width='15.1' height='15.1' fill='none' stroke='#c8c8c8' stroke-width='0.5' stroke-dasharray='0.8 0.8'/><path d='M4.5 4.5L9 3L13 4.5V13L9 14.5L4.5 13Z' fill='#7b8185'/><path d='M9 3L13 4.5V13L9 14.5Z' fill='#5f6569'/><path d='M10 7H13V10H10Z' fill='#a4a9ac'/></svg>
<span class='a t' style='left:130.10px;top:272.59px;font-size:8.6px;color:#4a4a4a;transform:scaleX(0.9350);transform-origin:0 0;'>000058/A;1-Horizontal Slider 2</span>
<span class='a t' style='left:295.30px;top:272.59px;font-size:8.6px;color:#4a4a4a;transform:scaleX(0.9500);transform-origin:0 0;'>A</span>
<span class='a t' style='left:354.30px;top:272.59px;font-size:8.6px;color:#4a4a4a;transform:scaleX(0.9450);transform-origin:0 0;'>Horizontal Slider 2</span>
<svg class=a style='left:107.39999999999999px;top:290px;' width='17.5' height='17.5' viewBox='0 0 17.5 17.5'><rect x='0.5' y='0.5' width='16.5' height='16.5' fill='#dedede' stroke='#6aaac4' stroke-width='1'/><rect x='1.2' y='1.2' width='15.1' height='15.1' fill='none' stroke='#c8c8c8' stroke-width='0.5' stroke-dasharray='0.8 0.8'/><path d='M2.5 8C4 6.5 8 6.5 14.5 8.6L13.5 10.6C9 10.2 5 10 3.5 9.8Z' fill='#8e9a9f'/><path d='M3 9.4C6 10 10 10.4 13.6 10.4' stroke='#5f6d72' stroke-width='0.8' fill='none'/></svg>
<span class='a t' style='left:130.10px;top:294.59px;font-size:8.6px;color:#4a4a4a;transform:scaleX(0.9350);transform-origin:0 0;'>000059/A;1-Vertical Slider 1</span>
<span class='a t' style='left:295.30px;top:294.59px;font-size:8.6px;color:#4a4a4a;transform:scaleX(0.9500);transform-origin:0 0;'>A</span>
<span class='a t' style='left:354.30px;top:294.59px;font-size:8.6px;color:#4a4a4a;transform:scaleX(0.9450);transform-origin:0 0;'>Vertical Slider 1</span>
<div class=a style='left:43px;top:330.9px;width:402px;height:1px;background:#eaeaea;'></div>
<svg class=a style='left:95.3px;top:317.5px;' width='5' height='7' viewBox='0 0 5 7'><path d='M0.6 0L3.8 3L0.6 6Z' fill='#3a3a3a'/></svg>
<svg class=a style='left:107.39999999999999px;top:312px;' width='17.5' height='17.5' viewBox='0 0 17.5 17.5'><rect x='0.5' y='0.5' width='16.5' height='16.5' fill='#dedede' stroke='#6aaac4' stroke-width='1'/><rect x='1.2' y='1.2' width='15.1' height='15.1' fill='none' stroke='#c8c8c8' stroke-width='0.5' stroke-dasharray='0.8 0.8'/><path d='M5 6L8.5 4.2L12.5 5.5V13.5L8.5 14.5L5 13Z' fill='#6f7478'/><path d='M8.5 4.2L12.5 5.5V13.5L8.5 14.5Z' fill='#868b8e'/><rect x='6' y='8' width='2' height='3' fill='#9ea3a6'/></svg>
<span class='a t' style='left:130.10px;top:316.59px;font-size:8.6px;color:#4a4a4a;transform:scaleX(0.9350);transform-origin:0 0;'>000066/A;1-Mill Head Large</span>
<span class='a t' style='left:295.30px;top:316.59px;font-size:8.6px;color:#4a4a4a;transform:scaleX(0.9500);transform-origin:0 0;'>A</span>
<span class='a t' style='left:354.30px;top:316.59px;font-size:8.6px;color:#4a4a4a;transform:scaleX(0.9450);transform-origin:0 0;'>Mill Head Large</span>
<div class=a style='left:43px;top:352.9px;width:402px;height:1px;background:#eaeaea;'></div>
<svg class=a style='left:107.39999999999999px;top:334px;' width='17.5' height='17.5' viewBox='0 0 17.5 17.5'><rect x='0.5' y='0.5' width='16.5' height='16.5' fill='#dedede' stroke='#6aaac4' stroke-width='1'/><rect x='1.2' y='1.2' width='15.1' height='15.1' fill='none' stroke='#c8c8c8' stroke-width='0.5' stroke-dasharray='0.8 0.8'/><path d='M8.3 2.5H9.2V15H8.3Z' fill='#6a6f72'/></svg>
<span class='a t' style='left:130.10px;top:338.59px;font-size:8.6px;color:#4a4a4a;transform:scaleX(0.9350);transform-origin:0 0;'>000060/A;1-Track 3</span>
<span class='a t' style='left:295.30px;top:338.59px;font-size:8.6px;color:#4a4a4a;transform:scaleX(0.9500);transform-origin:0 0;'>A</span>
<span class='a t' style='left:354.30px;top:338.59px;font-size:8.6px;color:#4a4a4a;transform:scaleX(0.9450);transform-origin:0 0;'>Track 3</span>
<div class=a style='left:43px;top:374.9px;width:402px;height:1px;background:#eaeaea;'></div>
<svg class=a style='left:107.39999999999999px;top:356px;' width='17.5' height='17.5' viewBox='0 0 17.5 17.5'><rect x='0.5' y='0.5' width='16.5' height='16.5' fill='#dedede' stroke='#6aaac4' stroke-width='1'/><rect x='1.2' y='1.2' width='15.1' height='15.1' fill='none' stroke='#c8c8c8' stroke-width='0.5' stroke-dasharray='0.8 0.8'/><path d='M7 4H10.5V14H7Z' fill='#71777a'/><path d='M9 4H10.5V14H9Z' fill='#5a5f62'/></svg>
<span class='a t' style='left:130.10px;top:360.59px;font-size:8.6px;color:#4a4a4a;transform:scaleX(0.9350);transform-origin:0 0;'>000061/A;1-Vertical Housing</span>
<span class='a t' style='left:295.30px;top:360.59px;font-size:8.6px;color:#4a4a4a;transform:scaleX(0.9500);transform-origin:0 0;'>A</span>
<span class='a t' style='left:354.30px;top:360.59px;font-size:8.6px;color:#4a4a4a;transform:scaleX(0.9450);transform-origin:0 0;'>Vertical Housing</span>
<svg class=a style='left:107.39999999999999px;top:378px;' width='17.5' height='17.5' viewBox='0 0 17.5 17.5'><rect x='0.5' y='0.5' width='16.5' height='16.5' fill='#dedede' stroke='#6aaac4' stroke-width='1'/><rect x='1.2' y='1.2' width='15.1' height='15.1' fill='none' stroke='#c8c8c8' stroke-width='0.5' stroke-dasharray='0.8 0.8'/><path d='M4.5 4.5L9 3L13 4.5V13L9 14.5L4.5 13Z' fill='#7b8185'/><path d='M9 3L13 4.5V13L9 14.5Z' fill='#5f6569'/><path d='M10 7H13V10H10Z' fill='#a4a9ac'/></svg>
<span class='a t' style='left:130.10px;top:382.59px;font-size:8.6px;color:#4a4a4a;transform:scaleX(0.9350);transform-origin:0 0;'>000063/A;1-Horizontal Slider 4</span>
<span class='a t' style='left:295.30px;top:382.59px;font-size:8.6px;color:#4a4a4a;transform:scaleX(0.9500);transform-origin:0 0;'>A</span>
<span class='a t' style='left:354.30px;top:382.59px;font-size:8.6px;color:#4a4a4a;transform:scaleX(0.9450);transform-origin:0 0;'>Horizontal Slider 4</span>
<div class=a style='left:43px;top:418.9px;width:402px;height:1px;background:#eaeaea;'></div>
<svg class=a style='left:107.39999999999999px;top:400px;' width='17.5' height='17.5' viewBox='0 0 17.5 17.5'><rect x='0.5' y='0.5' width='16.5' height='16.5' fill='#dedede' stroke='#6aaac4' stroke-width='1'/><rect x='1.2' y='1.2' width='15.1' height='15.1' fill='none' stroke='#c8c8c8' stroke-width='0.5' stroke-dasharray='0.8 0.8'/><path d='M8.3 2.5H9.2V15H8.3Z' fill='#6a6f72'/></svg>
<span class='a t' style='left:130.10px;top:404.59px;font-size:8.6px;color:#4a4a4a;transform:scaleX(0.9350);transform-origin:0 0;'>000062/A;1-Track 4</span>
<span class='a t' style='left:295.30px;top:404.59px;font-size:8.6px;color:#4a4a4a;transform:scaleX(0.9500);transform-origin:0 0;'>A</span>
<span class='a t' style='left:354.30px;top:404.59px;font-size:8.6px;color:#4a4a4a;transform:scaleX(0.9450);transform-origin:0 0;'>Track 4</span>
<div class=a style='left:43px;top:440.9px;width:402px;height:1px;background:#eaeaea;'></div>
<svg class=a style='left:107.39999999999999px;top:422px;' width='17.5' height='17.5' viewBox='0 0 17.5 17.5'><rect x='0.5' y='0.5' width='16.5' height='16.5' fill='#dedede' stroke='#6aaac4' stroke-width='1'/><rect x='1.2' y='1.2' width='15.1' height='15.1' fill='none' stroke='#c8c8c8' stroke-width='0.5' stroke-dasharray='0.8 0.8'/><path d='M5 4.5H11.5L12.5 5.5V13.5H5Z' fill='#70767a'/><path d='M10.5 4.5H12.5V13.5H10.5Z' fill='#5e6367'/></svg>
<span class='a t' style='left:130.10px;top:426.59px;font-size:8.6px;color:#4a4a4a;transform:scaleX(0.9350);transform-origin:0 0;'>000070/A;1-Horizontal Motion Block</span>
<span class='a t' style='left:295.30px;top:426.59px;font-size:8.6px;color:#4a4a4a;transform:scaleX(0.9500);transform-origin:0 0;'>A</span>
<span class='a t' style='left:354.30px;top:426.59px;font-size:8.6px;color:#4a4a4a;transform:scaleX(0.9450);transform-origin:0 0;'>Horizontal Motion Block</span>
<div class=a style='left:43px;top:462.9px;width:402px;height:1px;background:#eaeaea;'></div>
<svg class=a style='left:107.39999999999999px;top:444px;' width='17.5' height='17.5' viewBox='0 0 17.5 17.5'><rect x='0.5' y='0.5' width='16.5' height='16.5' fill='#dedede' stroke='#6aaac4' stroke-width='1'/><rect x='1.2' y='1.2' width='15.1' height='15.1' fill='none' stroke='#c8c8c8' stroke-width='0.5' stroke-dasharray='0.8 0.8'/><path d='M7 4H10.5V14H7Z' fill='#71777a'/><path d='M9 4H10.5V14H9Z' fill='#5a5f62'/></svg>
<span class='a t' style='left:130.10px;top:448.59px;font-size:8.6px;color:#4a4a4a;transform:scaleX(0.9350);transform-origin:0 0;'>000065/A;1-Vertical Cylinder</span>
<span class='a t' style='left:295.30px;top:448.59px;font-size:8.6px;color:#4a4a4a;transform:scaleX(0.9500);transform-origin:0 0;'>A</span>
<span class='a t' style='left:354.30px;top:448.59px;font-size:8.6px;color:#4a4a4a;transform:scaleX(0.9450);transform-origin:0 0;'>Vertical Cylinder</span>
<svg class=a style='left:107.39999999999999px;top:466px;' width='17.5' height='17.5' viewBox='0 0 17.5 17.5'><rect x='0.5' y='0.5' width='16.5' height='16.5' fill='#dedede' stroke='#6aaac4' stroke-width='1'/><rect x='1.2' y='1.2' width='15.1' height='15.1' fill='none' stroke='#c8c8c8' stroke-width='0.5' stroke-dasharray='0.8 0.8'/><path d='M4.5 4.5L9 3L13 4.5V13L9 14.5L4.5 13Z' fill='#7b8185'/><path d='M9 3L13 4.5V13L9 14.5Z' fill='#5f6569'/><path d='M10 7H13V10H10Z' fill='#a4a9ac'/></svg>
<span class='a t' style='left:130.10px;top:470.59px;font-size:8.6px;color:#4a4a4a;transform:scaleX(0.9350);transform-origin:0 0;'>000056/A;1-Horizontal Slider 3</span>
<span class='a t' style='left:295.30px;top:470.59px;font-size:8.6px;color:#4a4a4a;transform:scaleX(0.9500);transform-origin:0 0;'>A</span>
<span class='a t' style='left:354.30px;top:470.59px;font-size:8.6px;color:#4a4a4a;transform:scaleX(0.9450);transform-origin:0 0;'>Horizontal Slider 3</span>
<div class=a style='left:43px;top:506.9px;width:402px;height:1px;background:#eaeaea;'></div>
<svg class=a style='left:107.39999999999999px;top:488px;' width='17.5' height='17.5' viewBox='0 0 17.5 17.5'><rect x='0.5' y='0.5' width='16.5' height='16.5' fill='#dedede' stroke='#6aaac4' stroke-width='1'/><rect x='1.2' y='1.2' width='15.1' height='15.1' fill='none' stroke='#c8c8c8' stroke-width='0.5' stroke-dasharray='0.8 0.8'/><path d='M4.5 4.5L9 3L13 4.5V13L9 14.5L4.5 13Z' fill='#7b8185'/><path d='M9 3L13 4.5V13L9 14.5Z' fill='#5f6569'/><path d='M10 7H13V10H10Z' fill='#a4a9ac'/></svg>
<span class='a t' style='left:130.10px;top:492.59px;font-size:8.6px;color:#4a4a4a;transform:scaleX(0.9350);transform-origin:0 0;'>000064/A;1-Horizontal Slider 1</span>
<span class='a t' style='left:295.30px;top:492.59px;font-size:8.6px;color:#4a4a4a;transform:scaleX(0.9500);transform-origin:0 0;'>A</span>
<span class='a t' style='left:354.30px;top:492.59px;font-size:8.6px;color:#4a4a4a;transform:scaleX(0.9450);transform-origin:0 0;'>Horizontal Slider 1</span>
<div class=a style='left:43px;top:528.9px;width:402px;height:1px;background:#eaeaea;'></div>
<svg class=a style='left:107.39999999999999px;top:510px;' width='17.5' height='17.5' viewBox='0 0 17.5 17.5'><rect x='0.5' y='0.5' width='16.5' height='16.5' fill='#dedede' stroke='#6aaac4' stroke-width='1'/><rect x='1.2' y='1.2' width='15.1' height='15.1' fill='none' stroke='#c8c8c8' stroke-width='0.5' stroke-dasharray='0.8 0.8'/><path d='M2.5 8C4 6.5 8 6.5 14.5 8.6L13.5 10.6C9 10.2 5 10 3.5 9.8Z' fill='#8e9a9f'/><path d='M3 9.4C6 10 10 10.4 13.6 10.4' stroke='#5f6d72' stroke-width='0.8' fill='none'/></svg>
<span class='a t' style='left:130.10px;top:514.59px;font-size:8.6px;color:#4a4a4a;transform:scaleX(0.9350);transform-origin:0 0;'>000057/A;1-Vertical Slider 2</span>
<span class='a t' style='left:295.30px;top:514.59px;font-size:8.6px;color:#4a4a4a;transform:scaleX(0.9500);transform-origin:0 0;'>A</span>
<span class='a t' style='left:354.30px;top:514.59px;font-size:8.6px;color:#4a4a4a;transform:scaleX(0.9450);transform-origin:0 0;'>Vertical Slider 2</span>
<div class=a style='left:43px;top:550.9px;width:402px;height:1px;background:#eaeaea;'></div>
<svg class=a style='left:63.2px;top:537.5px;' width='5' height='7' viewBox='0 0 5 7'><path d='M0.6 0L3.8 3L0.6 6Z' fill='#3a3a3a'/></svg>
<svg class=a style='left:75.3px;top:532px;' width='17.5' height='17.5' viewBox='0 0 17.5 17.5'><rect x='0.5' y='0.5' width='16.5' height='16.5' fill='url(#tgr)' stroke='#6aaac4' stroke-width='1'/><rect x='1.5' y='1.5' width='14.5' height='14.5' fill='none' stroke='#8a8a8a' stroke-width='0.6'/><path d='M5.3 7V12.8H9.5M5.3 8.8H9.5' fill='none' stroke='#8a8a8a' stroke-width='0.6'/><polygon points='5.3,1.6639999999999997 8.1,3.176 5.3,4.8 2.5,3.176' fill='#eeeeee'/><polygon points='2.5,3.176 5.3,4.8 5.3,7.936 2.5,6.4239999999999995' fill='#d0d0d0'/><polygon points='5.3,4.8 8.1,3.176 8.1,6.4239999999999995 5.3,7.936' fill='#8e8e8e'/><polygon points='5.3,1.6639999999999997 8.1,3.176 8.1,6.4239999999999995 5.3,7.936 2.5,6.4239999999999995 2.5,3.176' fill='none' stroke='#666666' stroke-width='0.75'/><polygon points='12,5.4639999999999995 14.8,6.976 12,8.6 9.2,6.976' fill='#eeeeee'/><polygon points='9.2,6.976 12,8.6 12,11.736 9.2,10.224' fill='#d0d0d0'/><polygon points='12,8.6 14.8,6.976 14.8,10.224 12,11.736' fill='#8e8e8e'/><polygon points='12,5.4639999999999995 14.8,6.976 14.8,10.224 12,11.736 9.2,10.224 9.2,6.976' fill='none' stroke='#666666' stroke-width='0.75'/><polygon points='12,9.564 14.8,11.075999999999999 12,12.7 9.2,11.075999999999999' fill='#a8d8ec'/><polygon points='9.2,11.075999999999999 12,12.7 12,15.835999999999999 9.2,14.324' fill='#6cbddc'/><polygon points='12,12.7 14.8,11.075999999999999 14.8,14.324 12,15.835999999999999' fill='#3596c0'/><polygon points='12,9.564 14.8,11.075999999999999 14.8,14.324 12,15.835999999999999 9.2,14.324 9.2,11.075999999999999' fill='none' stroke='#2a7fa8' stroke-width='0.75'/></svg>
<span class='a t' style='left:98.15px;top:536.59px;font-size:8.6px;color:#4a4a4a;transform:scaleX(0.9350);transform-origin:0 0;'>000138/A;1-Milling Gantry</span>
<span class='a t' style='left:295.30px;top:536.59px;font-size:8.6px;color:#4a4a4a;transform:scaleX(0.9500);transform-origin:0 0;'>A</span>
<span class='a t' style='left:354.30px;top:536.59px;font-size:8.6px;color:#4a4a4a;transform:scaleX(0.9450);transform-origin:0 0;'>Milling Gantry</span>
<div class=a style='left:43px;top:572.9px;width:402px;height:1px;background:#eaeaea;'></div>
<svg class=a style='left:63.2px;top:559.5px;' width='5' height='7' viewBox='0 0 5 7'><path d='M0.6 0L3.8 3L0.6 6Z' fill='#3a3a3a'/></svg>
<svg class=a style='left:75.3px;top:554px;' width='17.5' height='17.5' viewBox='0 0 17.5 17.5'><rect x='0.5' y='0.5' width='16.5' height='16.5' fill='url(#tgr)' stroke='#6aaac4' stroke-width='1'/><rect x='1.5' y='1.5' width='14.5' height='14.5' fill='none' stroke='#8a8a8a' stroke-width='0.6'/><path d='M5.3 7V12.8H9.5M5.3 8.8H9.5' fill='none' stroke='#8a8a8a' stroke-width='0.6'/><polygon points='5.3,1.6639999999999997 8.1,3.176 5.3,4.8 2.5,3.176' fill='#eeeeee'/><polygon points='2.5,3.176 5.3,4.8 5.3,7.936 2.5,6.4239999999999995' fill='#d0d0d0'/><polygon points='5.3,4.8 8.1,3.176 8.1,6.4239999999999995 5.3,7.936' fill='#8e8e8e'/><polygon points='5.3,1.6639999999999997 8.1,3.176 8.1,6.4239999999999995 5.3,7.936 2.5,6.4239999999999995 2.5,3.176' fill='none' stroke='#666666' stroke-width='0.75'/><polygon points='12,5.4639999999999995 14.8,6.976 12,8.6 9.2,6.976' fill='#eeeeee'/><polygon points='9.2,6.976 12,8.6 12,11.736 9.2,10.224' fill='#d0d0d0'/><polygon points='12,8.6 14.8,6.976 14.8,10.224 12,11.736' fill='#8e8e8e'/><polygon points='12,5.4639999999999995 14.8,6.976 14.8,10.224 12,11.736 9.2,10.224 9.2,6.976' fill='none' stroke='#666666' stroke-width='0.75'/><polygon points='12,9.564 14.8,11.075999999999999 12,12.7 9.2,11.075999999999999' fill='#a8d8ec'/><polygon points='9.2,11.075999999999999 12,12.7 12,15.835999999999999 9.2,14.324' fill='#6cbddc'/><polygon points='12,12.7 14.8,11.075999999999999 14.8,14.324 12,15.835999999999999' fill='#3596c0'/><polygon points='12,9.564 14.8,11.075999999999999 14.8,14.324 12,15.835999999999999 9.2,14.324 9.2,11.075999999999999' fill='none' stroke='#2a7fa8' stroke-width='0.75'/></svg>
<span class='a t' style='left:98.15px;top:558.59px;font-size:8.6px;color:#4a4a4a;transform:scaleX(0.9350);transform-origin:0 0;'>000140/A;1-Tool Changer Type A</span>
<span class='a t' style='left:295.30px;top:558.59px;font-size:8.6px;color:#4a4a4a;transform:scaleX(0.9500);transform-origin:0 0;'>A</span>
<span class='a t' style='left:354.30px;top:558.59px;font-size:8.6px;color:#4a4a4a;transform:scaleX(0.9450);transform-origin:0 0;'>Tool Changer Type A</span>
<div class=a style='left:289px;top:134px;width:1px;height:442px;background:#ededed;'></div>
<div class=a style='left:445px;top:134px;width:11px;height:430px;background:#f1f1f1;'></div>
<svg class=a style='left:446px;top:136px;' width='9' height='6' viewBox='0 0 9 6'><path d='M1.4 4.6L4.5 1.6L7.6 4.6Z' fill='#a0a0a0'/></svg>
<div class=a style='left:446px;top:145px;width:9px;height:361px;background:#c1c1c1;'></div>
<svg class=a style='left:446px;top:555px;' width='9' height='6' viewBox='0 0 9 6'><path d='M1.4 1.4L4.5 4.4L7.6 1.4Z' fill='#505050'/></svg>
<div class=a style='left:290px;top:564px;width:155px;height:12px;background:#f1f1f1;'></div>
<svg class=a style='left:294px;top:565px;' width='6' height='9' viewBox='0 0 6 9'><path d='M4.4 1.4L1.4 4.4L4.4 7.4Z' fill='#a0a0a0'/></svg>
<div class=a style='left:301.3px;top:565.5px;width:13.6px;height:8.3px;background:#c1c1c1;'></div>
<svg class=a style='left:437px;top:565px;' width='6' height='9' viewBox='0 0 6 9'><path d='M1.4 1.4L4.4 4.4L1.4 7.4Z' fill='#505050'/></svg>
<div class=a style='left:445px;top:564px;width:11px;height:12px;background:#ececec;'></div>
<div class=a style='left:456px;top:88px;width:6px;height:488px;background:#ffffff;'></div>
<div class=a style='left:462px;top:88px;width:1px;height:488px;background:#e3e3e3;'></div>
<div class=a style='left:463px;top:88px;width:518px;height:488px;background:#ffffff;'></div>
<div class=a style='left:472px;top:177px;width:503px;height:399px;background:#f9f9f9;'></div>
<span class='a t' style='left:475.70px;top:96.26px;font-size:10.4px;color:#197fa8;transform:scaleX(0.8649);transform-origin:0 0;-webkit-text-stroke:0.25px #197fa8'>3D</span>
<div class=a style='left:473px;top:111.7px;width:16.5px;height:1.5px;background:#197fa8;'></div>
<span class='a t' style='left:503.80px;top:96.26px;font-size:10.4px;color:#333333;transform:scaleX(0.9374);transform-origin:0 0;-webkit-text-stroke:0.3px #333'>Overview</span>
<span class='a t' style='left:560.70px;top:96.26px;font-size:10.4px;color:#333333;transform:scaleX(0.9469);transform-origin:0 0;-webkit-text-stroke:0.3px #333'>Attachments</span>
<span class='a t' style='left:631.60px;top:96.26px;font-size:10.4px;color:#333333;transform:scaleX(0.9074);transform-origin:0 0;-webkit-text-stroke:0.3px #333'>Where Used</span>
<div class=a style='left:473px;top:118px;width:502px;height:27px;background:#ffffff;'></div>
<div class=a style='left:473px;top:144.4px;width:502px;height:1.3px;background:#cfcfcf;'></div>
<div class=a style='left:473px;top:145.7px;width:502px;height:2px;background:linear-gradient(#e2e2e2,#fafafa);'></div>
<div class=a style='left:473px;top:148px;width:502px;height:27px;background:#ffffff;'></div>
<div class=a style='left:473px;top:174.6px;width:502px;height:1.3px;background:#cfcfcf;'></div>
<div class=a style='left:473px;top:175.9px;width:502px;height:2px;background:linear-gradient(#e2e2e2,#f9f9f9);'></div>
<div class=a style='left:739px;top:118px;width:26.6px;height:26.4px;background:#d6e9ef;'></div>
<div class=a style='left:579px;top:148px;width:133.3px;height:26.6px;background:#d6e9ef;'></div>
<svg class=a style='left:478.7px;top:124.19999999999999px;' width='14' height='14' viewBox='0 0 14 14'><path d='M1.6 3.4H4L5 2.2H8.2L9.2 3.4H11.4V6.6M7 11H1.6V3.4' fill='none' stroke='#606060' stroke-width='0.9'/><circle cx='5.8' cy='6.8' r='2.2' fill='none' stroke='#606060' stroke-width='0.9'/><circle cx='9.8' cy='9.8' r='2.6' fill='#fff' stroke='#606060' stroke-width='0.9'/><path d='M9.8 8.4V11.2M8.4 9.8H11.2' fill='none' stroke='#606060' stroke-width='0.9'/></svg>
<svg class=a style='left:505.4px;top:124.19999999999999px;' width='14' height='14' viewBox='0 0 14 14'><path d='M2 2H10V6M7 11.4H2V2M3.8 4.4H8.2M3.8 6.4H6.6M3.8 8.4H6' fill='none' stroke='#606060' stroke-width='0.9'/><path d='M7.6 12C8 9.8 9.4 8.8 11.8 8.8M10.6 7.4L12 8.8L10.6 10.2' fill='none' stroke='#606060' stroke-width='0.9'/></svg>
<svg class=a style='left:532.4px;top:124.19999999999999px;' width='14' height='14' viewBox='0 0 14 14'><path d='M7.4 1.6C5 2.4 2.8 5 3 7.4C3.2 9.2 4.4 10.6 5.8 11M7.4 1.6C6.8 3.8 7 6.2 8.4 7.6' fill='none' stroke='#606060' stroke-width='1.1'/><ellipse cx='8.4' cy='9.8' rx='3' ry='2.2' fill='none' stroke='#606060' stroke-width='1.1'/><path d='M8.4 8.6V11' stroke='#909090' stroke-width='1'/></svg>
<svg class=a style='left:536.6px;top:138.1px;' width='6' height='4' viewBox='0 0 6 4'><path d='M0 0H6L3 3Z' fill='#c4c4c4'/></svg>
<svg class=a style='left:558.7px;top:124.19999999999999px;' width='14' height='14' viewBox='0 0 14 14'><path d='M1.2 7C2.8 4.6 4.8 3.6 7 3.6C9.2 3.6 11.2 4.6 12.8 7C11.2 9.4 9.2 10.4 7 10.4C4.8 10.4 2.8 9.4 1.2 7Z' fill='none' stroke='#606060' stroke-width='0.9'/><circle cx='7' cy='7' r='2.4' fill='none' stroke='#606060' stroke-width='0.9'/></svg>
<svg class=a style='left:562.3px;top:138.1px;' width='6' height='4' viewBox='0 0 6 4'><path d='M0 0H6L3 3Z' fill='#c4c4c4'/></svg>
<svg class=a style='left:585.6px;top:124.19999999999999px;' width='14' height='14' viewBox='0 0 14 14'><path d='M6 4.6H2V12H9.4V8' fill='none' stroke='#606060' stroke-width='0.9'/><circle cx='8.4' cy='5.4' r='3.6' fill='none' stroke='#606060' stroke-width='0.9'/><path d='M6.4 5.6L8.4 3.8' fill='none' stroke='#606060' stroke-width='0.9'/></svg>
<svg class=a style='left:612.4px;top:124.19999999999999px;' width='14' height='14' viewBox='0 0 14 14'><rect x='1.4' y='1.6' width='11.2' height='10.8' fill='none' stroke='#505050' stroke-width='1.1'/><path d='M3.2 3.4L5.6 5.8M3.2 3.4V5M3.2 3.4H4.8M10.8 3.4L8.4 5.8M10.8 3.4V5M10.8 3.4H9.2M3.2 10.6L5.6 8.2M3.2 10.6V9M3.2 10.6H4.8M10.8 10.6L8.4 8.2M10.8 10.6V9M10.8 10.6H9.2' fill='none' stroke='#606060' stroke-width='0.9'/></svg>
<svg class=a style='left:638.8px;top:124.19999999999999px;' width='14' height='14' viewBox='0 0 14 14'><path d='M11.2 4.4C10 2.6 8.4 1.8 6.6 1.8C3.8 1.8 1.6 4.2 1.6 7C1.6 9.8 3.8 12.2 6.8 12.2C9.8 12.2 12 9.8 12 7' fill='none' stroke='#606060' stroke-width='0.9'/><path d='M9.2 4.4H11.4V2' fill='none' stroke='#606060' stroke-width='0.9'/><circle cx='6.8' cy='7' r='0.9' fill='#606060'/></svg>
<svg class=a style='left:643px;top:138.1px;' width='6' height='4' viewBox='0 0 6 4'><path d='M0 0H6L3 3Z' fill='#c4c4c4'/></svg>
<svg class=a style='left:665.4px;top:124.19999999999999px;' width='14' height='14' viewBox='0 0 14 14'><path d='M10.6 6.6V2.4H1.6V9H7' fill='none' stroke='#606060' stroke-width='0.9'/><path d='M4 11H7' fill='none' stroke='#606060' stroke-width='0.9'/><circle cx='10' cy='10' r='2.4' fill='none' stroke='#606060' stroke-width='0.9'/><circle cx='10' cy='10' r='0.8' fill='#606060'/></svg>
<svg class=a style='left:692.2px;top:124.19999999999999px;' width='14' height='14' viewBox='0 0 14 14'><rect x='1.6' y='1.6' width='10.8' height='10.8' fill='none' stroke='#505050' stroke-width='1' stroke-dasharray='1.6 1.2'/><path d='M3.8 7.2L6 9.6L10.6 4' fill='none' stroke='#505050' stroke-width='1.2'/></svg>
<svg class=a style='left:718.6px;top:124.19999999999999px;' width='14' height='14' viewBox='0 0 14 14'><path d='M1.4 4.6V9.4M1.4 7H3.8M3.8 7L2.8 6M3.8 7L2.8 8M12.6 4.6V9.4M10.2 7H12.6M10.2 7L11.2 6M10.2 7L11.2 8' fill='none' stroke='#606060' stroke-width='0.9'/><path d='M5.4 5.4C5.4 4.4 6.2 4 7 4C7.8 4 8.4 4.6 8.4 5.2C8.4 6.2 7 6.4 7 7.6M7 9.2V9.8' fill='none' stroke='#606060' stroke-width='0.9'/></svg>
<svg class=a style='left:745.8px;top:124.19999999999999px;' width='14' height='14' viewBox='0 0 14 14'><path d='M2.6 11.4L11 3M8.4 2.8H11.4V5.8' fill='none' stroke='#606060' stroke-width='0.9'/><circle cx='2.6' cy='11.4' r='0.8' fill='#606060'/></svg>
<svg class=a style='left:772px;top:124.19999999999999px;' width='14' height='14' viewBox='0 0 14 14'><path d='M2.6 3.4L7.4 1.6L11.6 2.8V10.6L6.8 12.4L2.6 11.2Z' fill='#a4a4a4' stroke='#505050' stroke-width='0.9'/><path d='M2.6 3.4L6.8 4.8L11.6 2.8M6.8 4.8V12.4' fill='none' stroke='#606060' stroke-width='0.9'/><path d='M3.4 5.6L6 9.6M3.4 8.4L5.6 11.6M7.6 6.4L10.8 10.2M8 4.6L11 7.8M8 9L10 11.2' stroke='#505050' stroke-width='0.6'/></svg>
<svg class=a style='left:776.5px;top:138.1px;' width='6' height='4' viewBox='0 0 6 4'><path d='M0 0H6L3 3Z' fill='#c4c4c4'/></svg>
<svg class=a style='left:798.6px;top:124.19999999999999px;' width='14' height='14' viewBox='0 0 14 14'><path d='M2.6 3.4L7.4 1.6L11.6 2.8V10.6L6.8 12.4L2.6 11.2Z' fill='#e6e6e6' stroke='#a8a8a8' stroke-width='0.9'/><path d='M2.6 3.4L6.8 4.8L11.6 2.8M6.8 4.8V12.4' fill='none' stroke='#a8a8a8' stroke-width='0.9'/><path d='M3.4 5.6L6 9.6M3.4 8.4L5.6 11.6M7.6 6.4L10.8 10.2M8 4.6L11 7.8M8 9L10 11.2' stroke='#a8a8a8' stroke-width='0.6'/></svg>
<svg class=a style='left:825.2px;top:124.19999999999999px;' width='14' height='14' viewBox='0 0 14 14'><path d='M1.4 2.4H4M1.4 7H4M1.4 11.6H4M4 2.4V11.6M5.6 1.6H12.6V12.4H5.6Z M5.6 4.8H12.6M5.6 8.2H12.6' fill='none' stroke='#606060' stroke-width='0.9'/></svg>
<svg class=a style='left:954px;top:124.19999999999999px;' width='14' height='14' viewBox='0 0 14 14'><path d='M1.6 4.6V1.8H4.4M9.6 1.8H12.4V4.6M12.4 9.4V12.2H9.6M4.4 12.2H1.6V9.4' fill='none' stroke='#707070' stroke-width='1'/></svg>
<svg class=a style='left:479px;top:154.2px;' width='14' height='14' viewBox='0 0 14 14'><path d='M1.6 12.4L8.6 5.4' fill='none' stroke='#606060' stroke-width='0.9'/><path d='M9 3C9 1.8 10 1.4 10.8 1.4C11.6 1.4 12.4 2 12.4 2.8C12.4 4 11 4 11 5.4M11 6.8V7.4' fill='none' stroke='#606060' stroke-width='0.9'/></svg>
<svg class=a style='left:483px;top:168.5px;' width='6' height='4' viewBox='0 0 6 4'><path d='M0 0H6L3 3Z' fill='#c4c4c4'/></svg>
<svg class=a style='left:505.70000000000005px;top:154.2px;' width='14' height='14' viewBox='0 0 14 14'><path d='M2 2.2C5 4 8.4 7.8 11.4 11.8M12 2.2C9 4 5.6 7.8 2.6 11.8' fill='none' stroke='#606060' stroke-width='0.9'/><circle cx='2.4' cy='2.4' r='1.2' fill='none' stroke='#606060' stroke-width='0.9'/><circle cx='11.6' cy='2.4' r='1.2' fill='none' stroke='#606060' stroke-width='0.9'/></svg>
<svg class=a style='left:509.70000000000005px;top:168.5px;' width='6' height='4' viewBox='0 0 6 4'><path d='M0 0H6L3 3Z' fill='#c4c4c4'/></svg>
<svg class=a style='left:532.3px;top:154.2px;' width='14' height='14' viewBox='0 0 14 14'><path d='M2 10V2H7.4M4.6 4.4H9.2L12 7.2V12.4H4.6Z M9.2 4.4V7.2H12' fill='none' stroke='#606060' stroke-width='0.9'/></svg>
<svg class=a style='left:558.9px;top:154.2px;' width='14' height='14' viewBox='0 0 14 14'><path d='M7 1.8L11.8 4.4V9.8L7 12.4L2.2 9.8V4.4Z M2.2 4.4L7 7L11.8 4.4M7 7V12.4' fill='none' stroke='#606060' stroke-width='0.9'/></svg>
<svg class=a style='left:585.6px;top:154.2px;' width='14' height='14' viewBox='0 0 14 14'><path d='M2.2 4.4L7 7V12.4L2.2 9.8Z' fill='#707070'/><path d='M7 1.8L11.8 4.4V9.8L7 12.4L2.2 9.8V4.4Z M2.2 4.4L7 7L11.8 4.4M7 7V12.4' fill='none' stroke='#606060' stroke-width='0.9'/></svg>
<svg class=a style='left:611.9px;top:154.2px;' width='14' height='14' viewBox='0 0 14 14'><path d='M6.2 7.2H7.8V12H6.2Z' fill='#606060'/><path d='M7 1.8L11.8 4.4V9.8L7 12.4L2.2 9.8V4.4Z M2.2 4.4L7 7L11.8 4.4M7 7V12.4' fill='none' stroke='#606060' stroke-width='0.9'/></svg>
<svg class=a style='left:638.7px;top:154.2px;' width='14' height='14' viewBox='0 0 14 14'><path d='M8 7.8L10 6.8V8.8L8 9.8Z' fill='#606060'/><path d='M7 1.8L11.8 4.4V9.8L7 12.4L2.2 9.8V4.4Z M2.2 4.4L7 7L11.8 4.4M7 7V12.4' fill='none' stroke='#606060' stroke-width='0.9'/></svg>
<svg class=a style='left:665.5px;top:154.2px;' width='14' height='14' viewBox='0 0 14 14'><path d='M5 4.4L7 3.4L9 4.4L7 5.4Z' fill='#707070'/><path d='M7 1.8L11.8 4.4V9.8L7 12.4L2.2 9.8V4.4Z M2.2 4.4L7 7L11.8 4.4M7 7V12.4' fill='none' stroke='#606060' stroke-width='0.9'/></svg>
<svg class=a style='left:692px;top:154.2px;' width='14' height='14' viewBox='0 0 14 14'><circle cx='7' cy='7' r='5' fill='none' stroke='#606060' stroke-width='0.9'/><path d='M7 5V9M5 7H9' fill='none' stroke='#606060' stroke-width='0.9'/></svg>
<svg class=a style='left:954px;top:154.2px;' width='14' height='14' viewBox='0 0 14 14'><path d='M1.8 1.8L12.2 12.2M12.2 1.8L1.8 12.2' fill='none' stroke='#505050' stroke-width='1'/></svg>
<div class=a style='left:981px;top:88px;width:38px;height:488px;background:#f0f0f0;'></div>
<div class=a style='left:1019px;top:56px;width:5px;height:520px;background:#006c96;'></div>
<svg class=a style='left:993px;top:102.6px;' width='14' height='14' viewBox='0 0 14 14'><circle cx='7' cy='7' r='5.4' fill='none' stroke='#606060' stroke-width='0.9'/><path d='M7 6V10.2' fill='none' stroke='#606060' stroke-width='0.9'/><circle cx='7' cy='4.2' r='0.6' fill='#606060'/></svg>
<svg class=a style='left:993px;top:123.4px;' width='14' height='14' viewBox='0 0 14 14'><path d='M1.6 2.6H8.4V7.2H4.6L2.6 8.8V7.2H1.6Z' fill='none' stroke='#606060' stroke-width='0.9'/><path d='M8.4 4.8H12.4V9.6H11.6V11.4L9.6 9.6H5.6V7.2' fill='none' stroke='#606060' stroke-width='0.9'/></svg>
<svg class=a style='left:993px;top:146.3px;' width='14' height='14' viewBox='0 0 14 14'><path d='M9 12H2V4.6H5M12 8.6V12H9' fill='none' stroke='#606060' stroke-width='0.9'/><path d='M5 9.6C5.4 6.6 7.6 4.8 11.2 4.8M9.6 3L11.4 4.8L9.6 6.6' fill='none' stroke='#606060' stroke-width='0.9'/></svg>
<svg class=a style='left:982.5px;top:150.8px;' width='4' height='5' viewBox='0 0 4 5'><path d='M3 0L0.4 2.5L3 5Z' fill='#c4c4c4'/></svg>
<svg class=a style='left:993px;top:166.3px;' width='14' height='14' viewBox='0 0 14 14'><path d='M3.6 2.4L10 11M10.4 2.4L3.8 11' fill='none' stroke='#606060' stroke-width='0.9'/><circle cx='3.2' cy='11.4' r='1.5' fill='none' stroke='#606060' stroke-width='0.9'/><circle cx='10.8' cy='11.4' r='1.5' fill='none' stroke='#606060' stroke-width='0.9'/></svg>
<svg class=a style='left:993px;top:188px;' width='14' height='14' viewBox='0 0 14 14'><path d='M2.2 10V1.8H7.6M4.8 4.2H9.4L12.2 7V12.4H4.8Z M9.4 4.2V7H12.2' fill='none' stroke='#606060' stroke-width='0.9'/></svg>
<svg class=a style='left:993px;top:209.7px;' width='14' height='14' viewBox='0 0 14 14'><path d='M3.4 3H2V12.4H5M9.2 3H10.6V5' fill='none' stroke='#9a9a9a' stroke-width='0.9'/><rect x='4.4' y='1.4' width='3.8' height='2.6' fill='none' stroke='#9a9a9a' stroke-width='0.9'/><rect x='5.6' y='6' width='6.6' height='6.6' fill='none' stroke='#9a9a9a' stroke-width='0.9'/></svg>
<svg class=a style='left:993px;top:230.5px;' width='14' height='14' viewBox='0 0 14 14'><path d='M7 1.6V4.6M7 9.4V12.4M1.6 7H4.6M9.4 7H12.4M3.2 3.2L5.2 5.2M8.8 8.8L10.8 10.8M10.8 3.2L8.8 5.2M5.2 8.8L3.2 10.8' fill='none' stroke='#606060' stroke-width='0.9'/></svg>
<svg class=a style='left:982.5px;top:235.0px;' width='4' height='5' viewBox='0 0 4 5'><path d='M3 0L0.4 2.5L3 5Z' fill='#c4c4c4'/></svg>
<svg class=a style='left:993px;top:251.75px;' width='14' height='14' viewBox='0 0 14 14'><path d='M2.4 11.6L3 8.8L10 1.8L12.2 4L5.2 11Z M8.6 3.2L10.8 5.4' fill='none' stroke='#606060' stroke-width='0.9'/></svg>
<svg class=a style='left:982.5px;top:256.25px;' width='4' height='5' viewBox='0 0 4 5'><path d='M3 0L0.4 2.5L3 5Z' fill='#c4c4c4'/></svg>
<svg class=a style='left:993px;top:272.6px;' width='14' height='14' viewBox='0 0 14 14'><path d='M2 12L8.4 5.6M4 3C3 3 1.8 4 2.2 5.4L5 8.2M12 12L6.2 6.2M9.4 2L12 4.6L10.8 5.8L8.2 3.2Z' fill='none' stroke='#606060' stroke-width='0.9'/></svg>
<svg class=a style='left:982.5px;top:277.1px;' width='4' height='5' viewBox='0 0 4 5'><path d='M3 0L0.4 2.5L3 5Z' fill='#c4c4c4'/></svg>
<svg class=a style='left:993px;top:294px;' width='14' height='14' viewBox='0 0 14 14'><circle cx='3' cy='7' r='1.6' fill='none' stroke='#606060' stroke-width='0.9'/><circle cx='11' cy='3' r='1.6' fill='none' stroke='#606060' stroke-width='0.9'/><circle cx='11' cy='11' r='1.6' fill='none' stroke='#606060' stroke-width='0.9'/><path d='M4.4 6.2L9.6 3.8M4.4 7.8L9.6 10.2' fill='none' stroke='#606060' stroke-width='0.9'/></svg>
<svg class=a style='left:982.5px;top:298.5px;' width='4' height='5' viewBox='0 0 4 5'><path d='M3 0L0.4 2.5L3 5Z' fill='#c4c4c4'/></svg>
<svg class=a style='left:993px;top:315px;' width='14' height='14' viewBox='0 0 14 14'><path d='M1.2 7C2.8 4.6 4.8 3.6 7 3.6C9.2 3.6 11.2 4.6 12.8 7C11.2 9.4 9.2 10.4 7 10.4C4.8 10.4 2.8 9.4 1.2 7Z' fill='none' stroke='#606060' stroke-width='0.9'/><circle cx='7' cy='7' r='2.2' fill='none' stroke='#606060' stroke-width='0.9'/></svg>
<svg class=a style='left:982.5px;top:319.5px;' width='4' height='5' viewBox='0 0 4 5'><path d='M3 0L0.4 2.5L3 5Z' fill='#c4c4c4'/></svg>
<svg class=a style='left:495px;top:500px;' width='50' height='50' viewBox='0 0 50 50'><path d='M9.2 37.2V7.5' stroke='#1a1ae6' stroke-width='1.2'/><path d='M9.2 37.2L23.3 28.3' stroke='#2fa6a6' stroke-width='1.2'/><path d='M9.2 37.2L37.5 42.5' stroke='#e62020' stroke-width='1.3'/><path d='M8 3.4H10.4L8 6H10.4' stroke='#1a1ae6' stroke-width='0.8' fill='none'/><path d='M24 21.4L25.4 23.4M27 21.4L24.8 25' stroke='#2fa6a6' stroke-width='0.8' fill='none'/><path d='M38.6 37.4L42 40.6M42 37.4L38.6 40.6' stroke='#e8903a' stroke-width='0.8' fill='none'/></svg>
<svg class=a style='left:0;top:0' width='1024' height='576' viewBox='0 0 1024 576'><polygon points='513.7,431.4 637,358.6 893,405.4 813.2,504.4' fill='#8a979b' /><polygon points='511.8,431.4 813.2,504.4 818,519 807,518 527.5,450 511.8,447' fill='#5a666a' /><polygon points='813.2,504.4 893,405.4 895,419 815,524.4' fill='#616c71' /><polygon points='513.9,431 527,434.5 527,450 513.9,445.5' fill='#6f7c81' /><polygon points='516.5,440 527,437 527,449.5 516.5,446' fill='#8e9a9e' /><polygon points='511.3,444.5 528.6,449.6 529.5,451.5 512,446.5' fill='#7a878b' /><polygon points='798,505.6 815.2,506.8 815,524.4 798,520' fill='#5f6a6f' /><polygon points='798,519.7 806.6,508 813.6,508.8 813.6,522.8' fill='#8a979b' /><polygon points='796.4,520 814.4,524.4 819,520 824.5,521.6 819,527.5 796.4,522' fill='#7d8a8e' /><path d='M601 452.7L717 370.5M700 478.4L789.5 393' stroke='#5b676b' stroke-width='1.3'/><path d='M602.5 453.5L718.5 371.3M701.5 479L791 394' stroke='#a3aeb2' stroke-width='0.6'/><polygon points='631,421.5 749,448.5 800,410.5 800,409 749,447 631,420' fill='#4f6a7c' /><polygon points='631,420 682,382 800,409 749,447' fill='#7c9cb1' /><path d='M636.1 416.2L754.1 443.2M641.2 412.4L759.2 439.4M646.3 408.6L764.3 435.6M651.4 404.8L769.4 431.8M656.5 401.0L774.5 428.0M661.6 397.2L779.6 424.2M666.7 393.4L784.7 420.4M671.8 389.6L789.8 416.6M676.9 385.8L794.9 412.8M638.9 421.8L689.9 383.8M646.7 423.6L697.7 385.6M654.6 425.4L705.6 387.4M662.5 427.2L713.5 389.2M670.3 429.0L721.3 391.0M678.2 430.8L729.2 392.8M686.1 432.6L737.1 394.6M693.9 434.4L744.9 396.4M701.8 436.2L752.8 398.2M709.7 438.0L760.7 400.0M717.5 439.8L768.5 401.8M725.4 441.6L776.4 403.6M733.3 443.4L784.3 405.4M741.1 445.2L792.1 407.2' stroke='#587589' stroke-width='0.8'/><path d='M631 420L749 447L800 409' stroke='#5a7689' stroke-width='0.9' fill='none'/><polygon points='741.7,394.2 733.3,402.1 749,408.8 760,398' fill='#8a979b' /><polygon points='794,300 862,300 855.3,441.8 792.5,431' fill='#59646a' /><polygon points='643.3,300 661,303 662,387.3 646.2,397.2' fill='#647075' /><polygon points='588.3,232.1 864,264.6 861,330 794,323.5 659,307 643.3,305.5 646,397.2 596.2,388.3' fill='#59646a' /><polygon points='588.3,232.1 607.6,226.2 875.5,255.7 864,264.6' fill='#7e8b90' /><polygon points='864,264.6 875.5,255.7 865.5,434 855.3,441.8' fill='#6a767b' /><path d='M585.4 239.3L864 269' stroke='#7a878c' stroke-width='1.6'/><path d='M586 241.2L864 271' stroke='#4c565b' stroke-width='0.6'/><path d='M588.3 290.4L859 328.3' stroke='#7a878c' stroke-width='1.6'/><path d='M589 292.3L859 330.2' stroke='#4c565b' stroke-width='0.6'/><path d='M596.2 388.3L646.2 397.2L662 387.3' stroke='#4f5a5e' stroke-width='0.8' fill='none'/><polygon points='580.6,329 595.9,325.8 595.9,402 582.4,405.5' fill='#637076' /><polygon points='565.3,329 580.6,330.6 582.4,405.5 567.7,401.3' fill='#5a666b' /><polygon points='566,397 570,398.5 570,404 566,402.5' fill='#6c797e' /><path d='M581.4 320L598.7 309.8' stroke='#6f7c82' stroke-width='2.8'/><polygon points='595,314.5 600.8,313.5 600.8,322.8 595,323.8' fill='#67747a' /><polygon points='592.5,325 606.4,322.1 607,325.6 592.8,331.2' fill='#6b787d' /><polygon points='561.6,326 577,319.3 592.5,321.5 592.5,326.5 579,331.5 561.6,331' fill='#738187' /><polygon points='561.6,328.5 579,331.5 592.5,326.5 592.5,328 579,333 561.6,331.5' fill='#5e6a6f' /><polygon points='570.5,327 578,323.6 585,324.8 578.5,328.8' fill='#ffffff' /><polygon points='595.9,376.4 609.2,374.5 609.2,380.3 596.8,384' fill='#6c797f' /><polygon points='595.9,376.4 609.2,374.5 609.2,376 596.5,378.5' fill='#7d8a90' /><path d='M594.2 336V378' stroke='#ffffff' stroke-width='1.1' stroke-dasharray='3.5 1.5'/><polygon points='750.8,242.3 834.3,248 831.3,345.1 823.5,350 749.9,338.3' fill='#1e4345' /><polygon points='751,242.5 757.5,238.5 835.5,246.5 835,251 757,245.5' fill='#eea347' /><polygon points='759.7,245 763,245 763,339 759.7,339' fill='#e39a40' /><polygon points='812.7,248.5 816.6,248.5 816.6,348.5 812.7,348' fill='#e39a40' /><polygon points='827.4,248.5 835,248 831.3,345.1 823.5,350' fill='#e8a044' /><polygon points='755.8,256 758.5,253 805.5,258.5 805.5,266.5 788.1,270.5 756.7,269.8' fill='#eea447' /><polygon points='755.8,256 758.5,253 805.5,258.5 805.5,262 774,266 757,264' fill='#f3b05a' /><polygon points='756.7,269.8 788.1,270.8 787.2,360 755.8,360.8' fill='#e39637' /><polygon points='772,270.4 788.1,270.8 787.2,360 772,360.4' fill='#d38a33' /><polygon points='787,311.8 815.6,313.7 815.6,318.5 787.2,323.6' fill='#eba247' /><polygon points='755.8,358 787.2,358 786,362 781,367.5 765,367.5 757,362' fill='#d88e37' /><polygon points='748,374 764.3,363.7 784.4,363.7 785,368.2 776.6,372.8 766.9,379.3' fill='#f2ac54' /><polygon points='748,374 766.9,379.3 766.9,415 748,411.2' fill='#e9993c' /><polygon points='766.9,379.3 776.6,372.8 785,370.2 789.6,373.4 789,415 783,419 766.9,415' fill='#e39539' /><polygon points='776.6,372.8 785,370.2 789.6,373.4 781,376' fill='#f0a850' /><polygon points='774.7,380.6 780.5,378.5 780.5,393 774.7,395' fill='#cf8431' /><polygon points='774.7,388 779,391 774.7,394' fill='#f3b45e' /><path d='M872.2 440V476.3' stroke='#67747a' stroke-width='2.6'/><path d='M854.5 473.4L887 480.8M864.8 485.2L878 467.5' stroke='#6c797f' stroke-width='2.6'/><polygon points='854.5,423.2 869.3,405.4 897.3,423.2 881,445.3' fill='#8b979b' stroke='#5c686c' stroke-width='1'/><polygon points='881,445.3 897.3,423.2 897.5,426 882,448' fill='#5c686c' /></svg>
<div class=a style='left:804.8px;top:258.2px;width:123.7px;height:34.5px;background:rgba(16,157,157,0.94);'></div>
<span class='a t' style='left:856.55px;top:262.31px;font-size:7.4px;color:#ffffff;transform:scaleX(1.0314);transform-origin:0 0;-webkit-text-stroke:0.25px #fff'>Plane</span>
<span class='a t' style='left:806.80px;top:272.51px;font-size:7.4px;color:#ffffff;transform:scaleX(1.1182);transform-origin:0 0;-webkit-text-stroke:0.25px #fff'>Normal: [0.0000 -1.0000 0.0000]</span>
<span class='a t' style='left:835.30px;top:282.11px;font-size:7.4px;color:#ffffff;transform:scaleX(1.0835);transform-origin:0 0;-webkit-text-stroke:0.25px #fff'>Area:0.6090 msq</span>
</body></html>
